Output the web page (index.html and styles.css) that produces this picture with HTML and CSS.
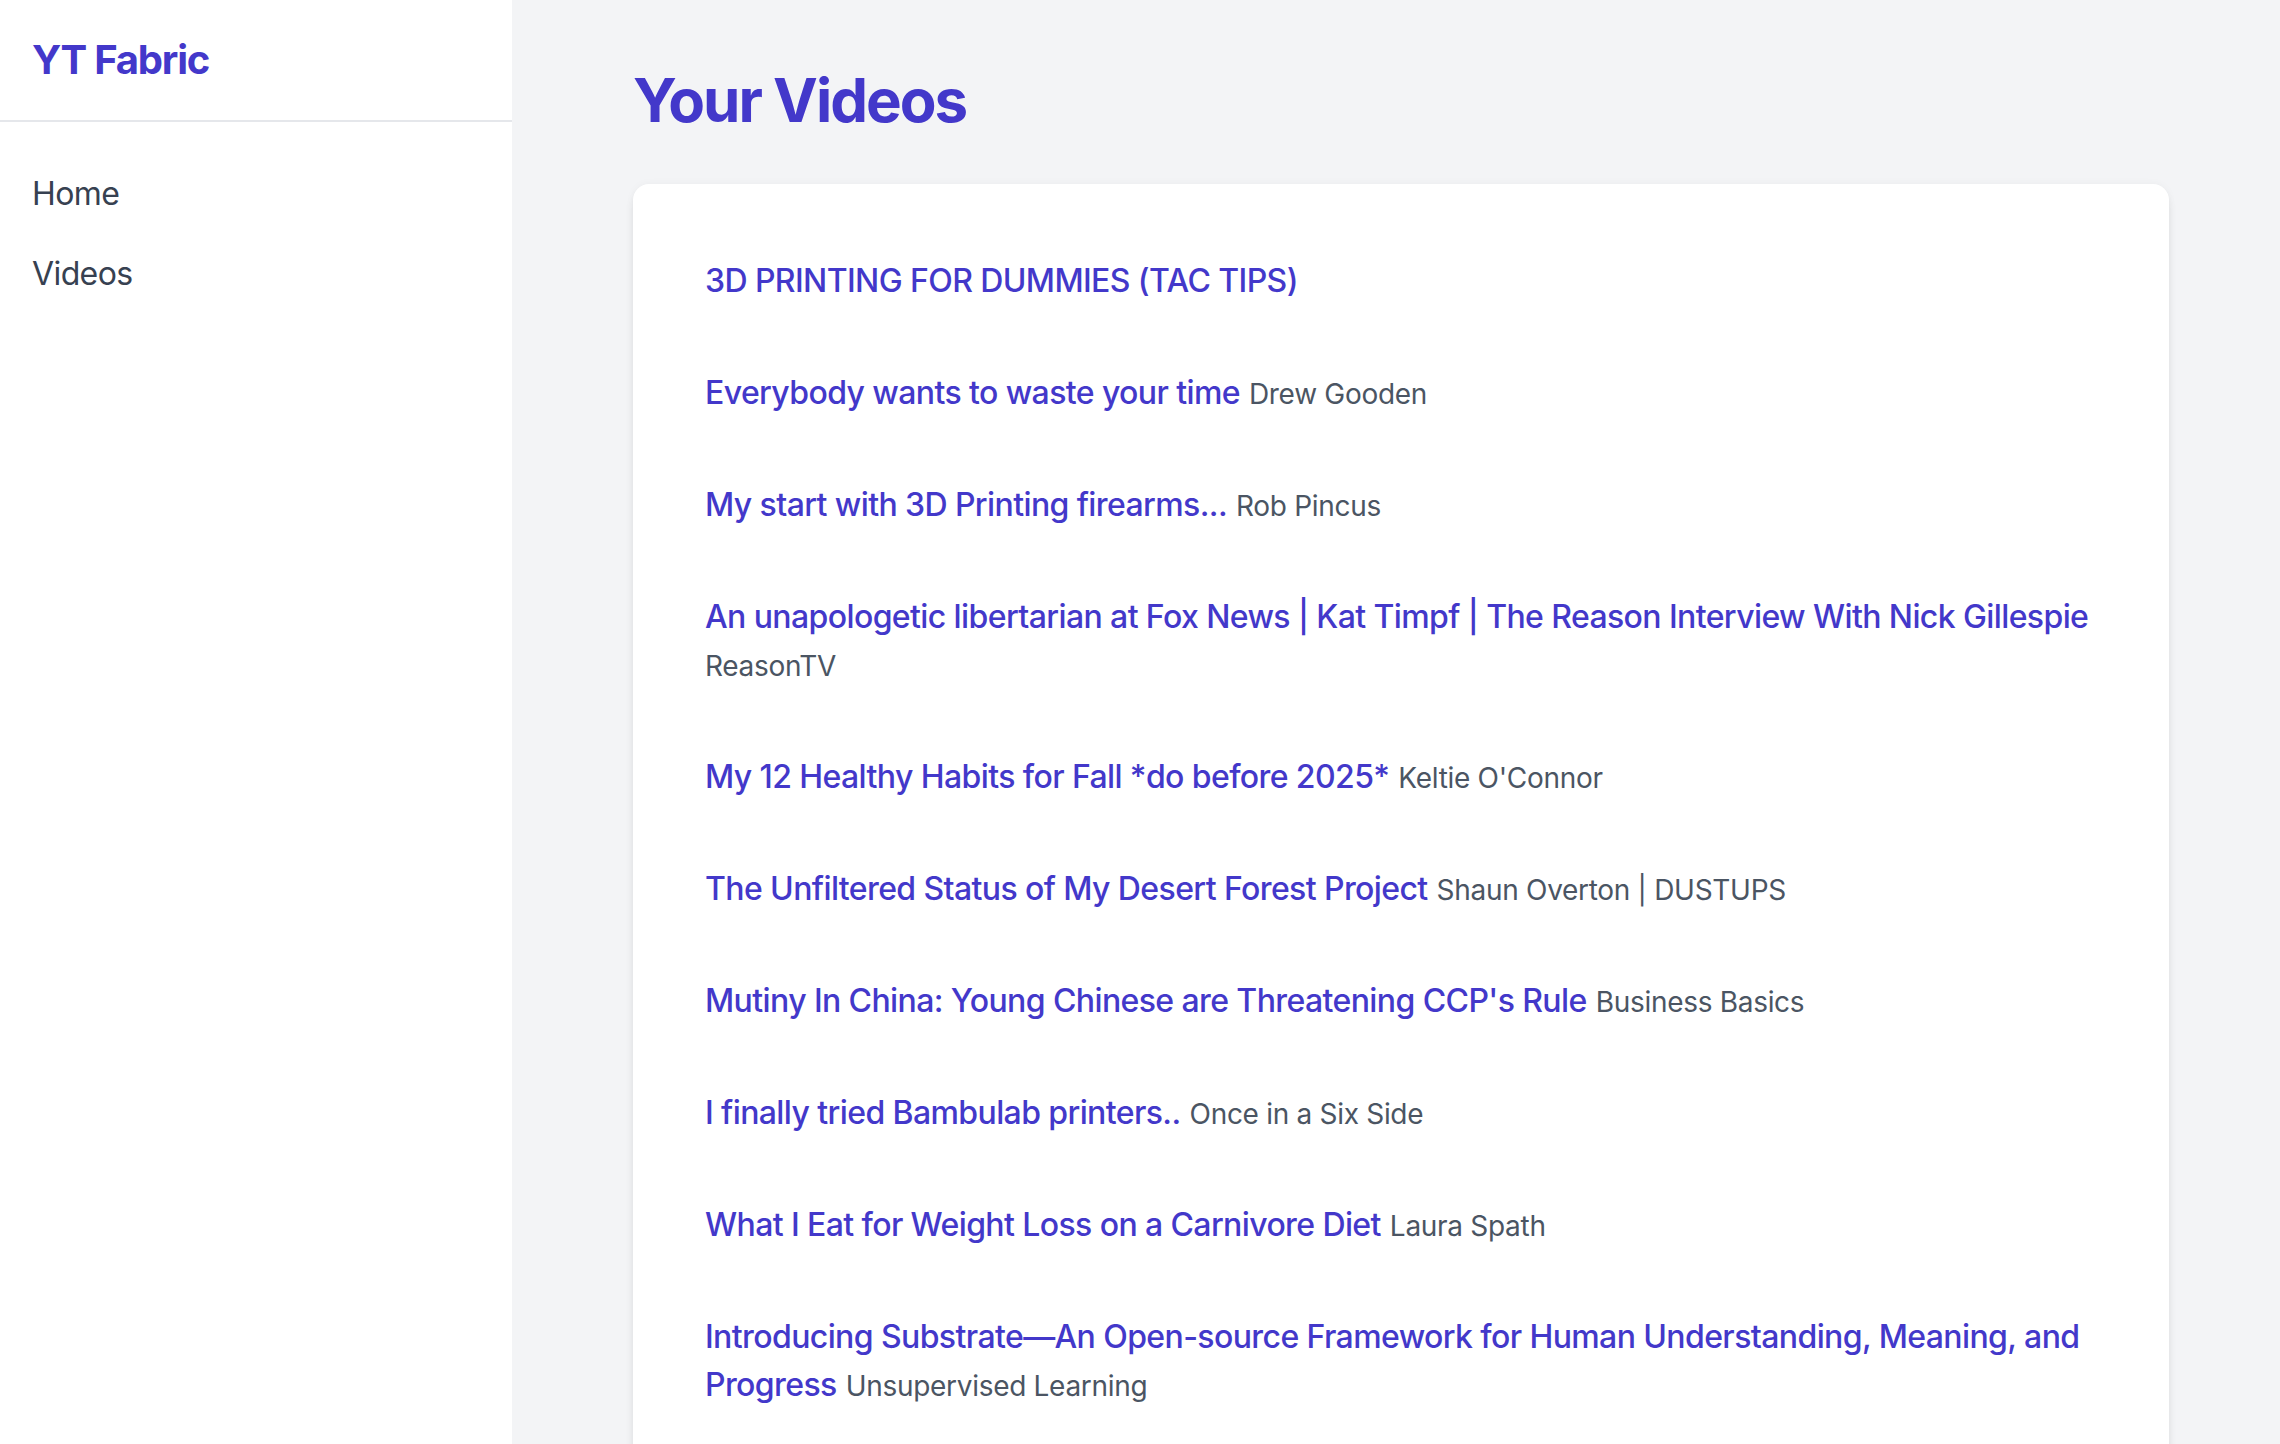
FILE: index.html
```html
<!DOCTYPE html>
<html lang="en">
<head>
<meta charset="utf-8">
<title>YT Fabric</title>
<link rel="stylesheet" href="styles.css">
</head>
<body>
<div class="layout">
  <aside class="sidebar">
    <div class="brand">YT Fabric</div>
    <nav class="nav">
      <a class="nav-link" href="#">Home</a>
      <a class="nav-link" href="#">Videos</a>
    </nav>
  </aside>
  <main class="main">
    <div class="container">
      <h1 class="page-title">Your Videos</h1>
      <div class="card">
        <ul class="video-list">
          <li class="video-item"><a class="video-title" href="#">3D PRINTING FOR DUMMIES (TAC TIPS)</a></li>
          <li class="video-item"><a class="video-title" href="#">Everybody wants to waste your time</a> <span class="video-author">Drew Gooden</span></li>
          <li class="video-item"><a class="video-title" href="#">My start with 3D Printing firearms...</a> <span class="video-author">Rob Pincus</span></li>
          <li class="video-item"><a class="video-title" href="#">An unapologetic libertarian at Fox News | Kat Timpf | The Reason Interview With Nick Gillespie</a> <span class="video-author">ReasonTV</span></li>
          <li class="video-item"><a class="video-title" href="#">My 12 Healthy Habits for Fall *do before 2025*</a> <span class="video-author">Keltie O'Connor</span></li>
          <li class="video-item"><a class="video-title" href="#">The Unfiltered Status of My Desert Forest Project</a> <span class="video-author">Shaun Overton | DUSTUPS</span></li>
          <li class="video-item"><a class="video-title" href="#">Mutiny In China: Young Chinese are Threatening CCP's Rule</a> <span class="video-author">Business Basics</span></li>
          <li class="video-item"><a class="video-title" href="#">I finally tried Bambulab printers..</a> <span class="video-author">Once in a Six Side</span></li>
          <li class="video-item"><a class="video-title" href="#">What I Eat for Weight Loss on a Carnivore Diet</a> <span class="video-author">Laura Spath</span></li>
          <li class="video-item"><a class="video-title" href="#">Introducing Substrate—An Open-source Framework for Human Understanding, Meaning, and Progress</a> <span class="video-author">Unsupervised Learning</span></li>
        </ul>
      </div>
    </div>
  </main>
</div>
</body>
</html>
```

FILE: styles.css
```css
* { box-sizing: border-box; }
html, body {
  margin: 0;
  padding: 0;
}
body {
  font-family: Inter, "Noto Sans", "Liberation Sans", sans-serif;
  background: #f3f4f6;
  color: #111827;
}
.layout {
  display: flex;
  min-height: 100vh;
}
.sidebar {
  width: 512px;
  flex-shrink: 0;
  background: #ffffff;
}
.brand {
  padding: 32px;
  font-size: 40px;
  line-height: 56px;
  font-weight: 700;
  color: #4338ca;
  border-bottom: 2px solid #e5e7eb;
  letter-spacing: -1.2px;
}
.nav {
  display: flex;
  flex-direction: column;
  padding: 32px;
}
.nav-link {
  display: block;
  padding: 16px 0;
  font-size: 32px;
  line-height: 48px;
  color: #374151;
  text-decoration: none;
  letter-spacing: -0.6px;
}
.main {
  flex: 1;
  padding: 64px 47px 64px 57px;
}
.container {
  max-width: 1536px;
  margin: 0 auto;
}
.page-title {
  margin: 0 0 48px 0;
  font-size: 60px;
  line-height: 72px;
  font-weight: 700;
  color: #4338ca;
  letter-spacing: -2px;
}
.card {
  background: #ffffff;
  border-radius: 16px;
  box-shadow: 0 8px 12px -2px rgba(0,0,0,0.08), 0 4px 8px -4px rgba(0,0,0,0.08), 0 0 8px rgba(0,0,0,0.04);
  padding: 40px;
}
.video-list {
  list-style: none;
  margin: 0;
  padding: 0;
}
.video-item {
  padding: 33px 32px 31px;
  font-size: 32px;
  line-height: 48px;
}
.video-title {
  color: #4338ca;
  font-weight: 500;
  text-decoration: none;
  letter-spacing: -0.6px;
}
.video-author {
  font-size: 28px;
  line-height: 40px;
  color: #4b5563;
  letter-spacing: -0.3px;
}
```
